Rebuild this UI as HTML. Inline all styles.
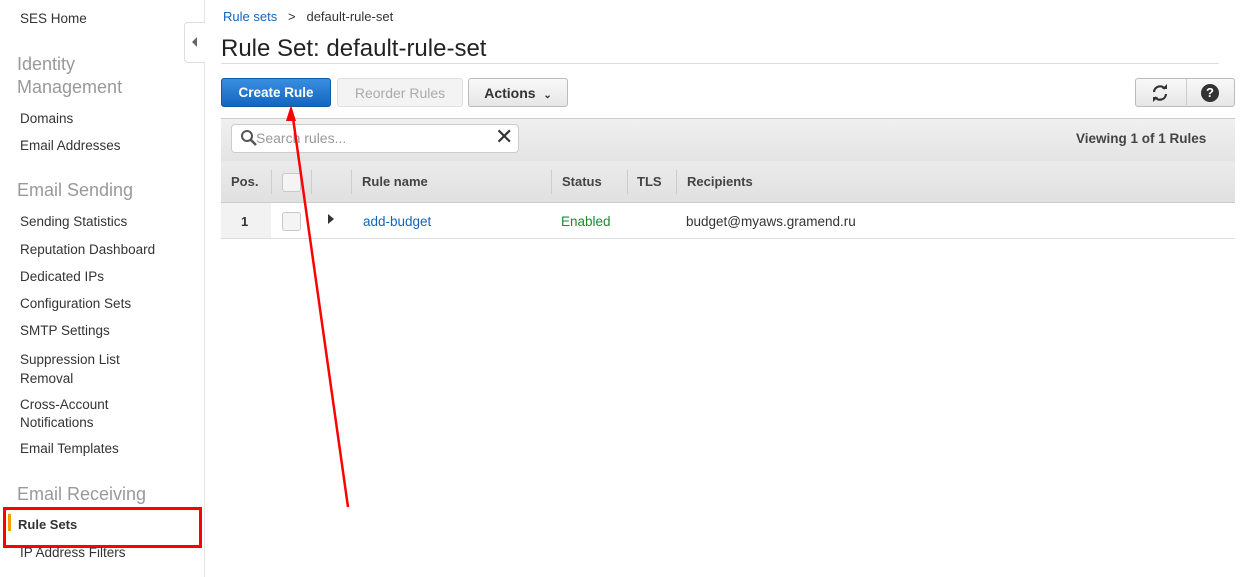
<!DOCTYPE html>
<html><head><style>
body{margin:0;width:1245px;height:577px;position:relative;background:#fff;font-family:"Liberation Sans",Arial,sans-serif;font-size:13px;color:#333;overflow:hidden}
.a{position:absolute;white-space:nowrap}
.side{position:absolute;left:0;top:0;width:204px;height:577px;border-right:1px solid #e4e4e4}
.h{color:#999;font-size:18px}
.btn{position:absolute;top:78px;height:29px;border-radius:3px;box-sizing:border-box;font-size:14px;text-align:center;line-height:28px}
.th{position:absolute;top:161px;height:41px;line-height:41px;font-weight:bold;font-size:13px;color:#444}
.sep{position:absolute;top:170px;height:24px;width:1px;background:#ccc}
.cb{position:absolute;width:17px;height:17px;border:1px solid #c8c8c8;border-radius:3px;background:#f4f4f4}
</style></head><body>
<div class="side"></div>
<div class="a" style="left:20px;top:11px;font-size:13.5px">SES Home</div>
<div class="a h" style="left:17px;top:53px;line-height:23px">Identity<br>Management</div>
<div class="a" style="left:20px;top:111px;font-size:13.5px">Domains</div>
<div class="a" style="left:20px;top:138px;font-size:13.5px">Email Addresses</div>
<div class="a h" style="left:17px;top:180px">Email Sending</div>
<div class="a" style="left:20px;top:214px;font-size:13.5px">Sending Statistics</div>
<div class="a" style="left:20px;top:242px;font-size:13.5px">Reputation Dashboard</div>
<div class="a" style="left:20px;top:269px;font-size:13.5px">Dedicated IPs</div>
<div class="a" style="left:20px;top:296px;font-size:13.5px">Configuration Sets</div>
<div class="a" style="left:20px;top:323px;font-size:13.5px">SMTP Settings</div>
<div class="a" style="left:20px;top:350px;line-height:19px;font-size:13.5px">Suppression List<br>Removal</div>
<div class="a" style="left:20px;top:396px;line-height:18px;font-size:13.5px">Cross-Account<br>Notifications</div>
<div class="a" style="left:20px;top:441px;font-size:13.5px">Email Templates</div>
<div class="a h" style="left:17px;top:484px">Email Receiving</div>
<div class="a" style="left:8px;top:514px;width:3px;height:17px;background:#f90"></div>
<div class="a" style="left:18px;top:517px;font-weight:bold">Rule Sets</div>
<div class="a" style="left:3px;top:507px;width:193px;height:35px;border:3px solid #f00"></div>
<div class="a" style="left:20px;top:545px;font-size:13.5px">IP Address Filters</div>
<div class="a" style="left:184px;top:22px;width:20px;height:39px;border:1px solid #ddd;border-right:none;border-radius:4px 0 0 4px;background:#fff"></div>
<div class="a" style="left:192px;top:37px;width:0;height:0;border-top:5px solid transparent;border-bottom:5px solid transparent;border-right:5px solid #666"></div>

<div class="a" style="left:223px;top:9px"><span style="color:#1166bb">Rule sets</span> &nbsp;&nbsp;&gt;&nbsp;&nbsp; default-rule-set</div>
<div class="a" style="left:221px;top:35px;font-size:24px;color:#222">Rule Set: default-rule-set</div>
<div class="a" style="left:221px;top:63px;width:998px;height:1px;background:#ddd"></div>
<div class="btn" style="left:221px;width:110px;background:linear-gradient(#3a8ee0,#1565c0);border:1px solid #105aa8;color:#fff;font-weight:bold;font-size:13.5px">Create Rule</div>
<div class="btn" style="left:337px;width:126px;background:#f3f3f3;border:1px solid #e0e0e0;color:#aaa">Reorder Rules</div>
<div class="btn" style="left:468px;width:100px;background:linear-gradient(#f8f8f8,#e6e6e6);border:1px solid #bbb;color:#333;font-weight:bold">Actions &nbsp;<span style="font-size:10px">&#8964;</span></div>
<div class="btn" style="left:1135px;width:100px;background:linear-gradient(#f8f8f8,#e6e6e6);border:1px solid #bbb"></div>
<div class="a" style="left:1186px;top:79px;width:1px;height:26px;background:#ccc"></div>
<svg class="a" style="left:1150px;top:83px" width="20" height="20" viewBox="0 0 20 20"><path d="M4 9a6 6 0 0 1 11-3M16 11a6 6 0 0 1-11 3" stroke="#333" stroke-width="2.2" fill="none"/><path d="M12 6h5V1z M8 14H3v5z" fill="#333"/></svg>
<div class="a" style="left:1201px;top:84px;width:18px;height:18px;border-radius:50%;background:#333;color:#fff;font-weight:bold;font-size:13px;text-align:center;line-height:18px">?</div>

<div class="a" style="left:221px;top:118px;width:1014px;height:42px;background:linear-gradient(#f0f0f0,#e4e4e4);border-top:1px solid #ccc;border-bottom:1px solid #ccc"></div>
<div class="a" style="left:231px;top:124px;width:286px;height:27px;background:#fff;border:1px solid #ccc;border-radius:4px"></div>
<svg class="a" style="left:240px;top:129px" width="18" height="18"><circle cx="7" cy="7" r="5" stroke="#555" stroke-width="2" fill="none"/><path d="M11 11l5 5" stroke="#555" stroke-width="2.5"/></svg>
<div class="a" style="left:256px;top:130px;color:#999;font-size:14px">Search rules...</div>
<div class="a" style="left:495px;top:124px;font-size:22px;color:#333">&#10005;</div>
<div class="a" style="left:1076px;top:131px;font-weight:bold;color:#444;font-size:13.5px">Viewing 1 of 1 Rules</div>
<div class="a" style="left:221px;top:161px;width:1014px;height:41px;background:linear-gradient(#ebebeb,#e0e0e0);border-bottom:1px solid #ccc"></div>
<div class="th" style="left:231px">Pos.</div>
<div class="sep" style="left:271px"></div><div class="sep" style="left:311px"></div><div class="sep" style="left:351px"></div><div class="sep" style="left:551px"></div><div class="sep" style="left:627px"></div><div class="sep" style="left:676px"></div>
<div class="cb" style="left:282px;top:173px"></div>
<div class="th" style="left:362px">Rule name</div>
<div class="th" style="left:562px">Status</div>
<div class="th" style="left:637px">TLS</div>
<div class="th" style="left:687px">Recipients</div>
<div class="a" style="left:221px;top:203px;width:50px;height:35px;background:#f2f2f2"></div>
<div class="a" style="left:221px;top:238px;width:1014px;height:1px;background:#ddd"></div>
<div class="a" style="left:241px;top:214px;font-weight:bold">1</div>
<div class="cb" style="left:282px;top:212px"></div>
<div class="a" style="left:328px;top:214px;width:0;height:0;border-top:5px solid transparent;border-bottom:5px solid transparent;border-left:6px solid #333"></div>
<div class="a" style="left:363px;top:214px;color:#1166bb;font-size:13.5px">add-budget</div>
<div class="a" style="left:561px;top:214px;color:#1d8a2e;font-size:13.5px">Enabled</div>
<div class="a" style="left:686px;top:214px;font-size:13.5px">budget@myaws.gramend.ru</div>

<svg class="a" style="left:0;top:0" width="1245" height="577"><line x1="348" y1="507" x2="293" y2="118" stroke="#f00" stroke-width="2.5"/><path d="M291 105l-5 16h10z" fill="#f00"/></svg>
</body></html>
